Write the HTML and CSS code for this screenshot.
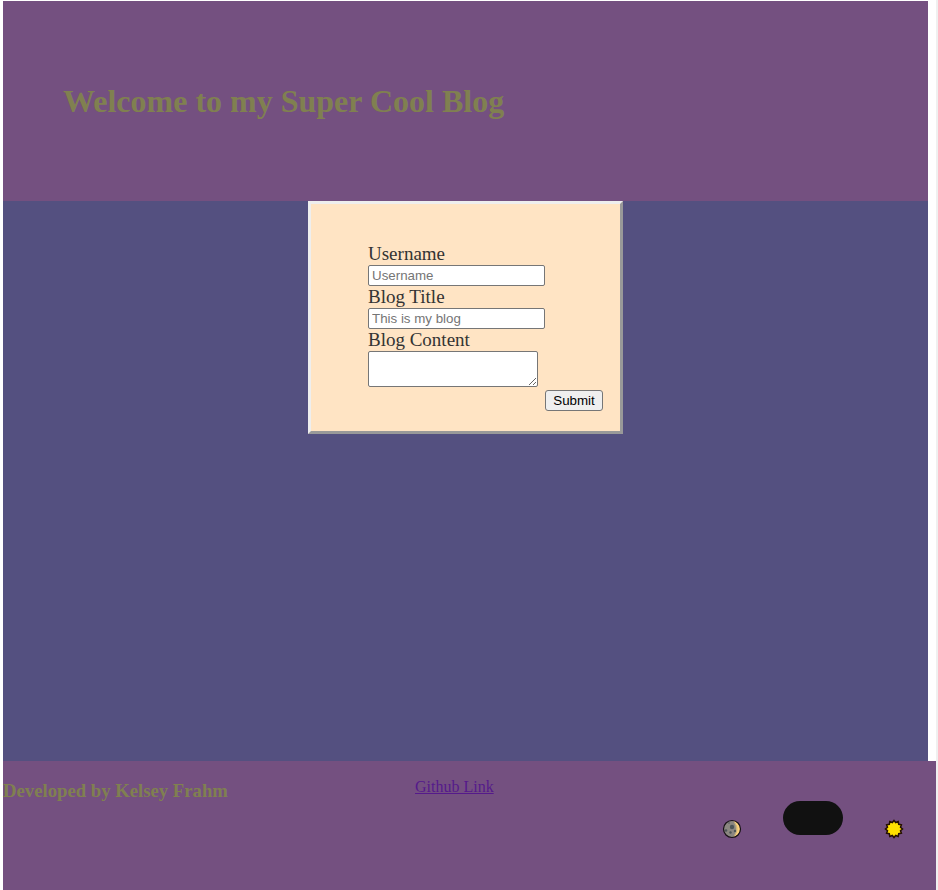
FILE: index.html
```html
<!DOCTYPE html>
<html lang="en">
<head>
<meta charset="utf-8">
<meta name="viewport" content="width=device-width, initial-scale=1">
<title>Super Cool Blog</title>
<link rel="stylesheet" href="styles.css">
</head>
<body>
<header class="banner">
  <h1>Welcome to my Super Cool Blog</h1>
</header>
<main class="content">
  <form class="entry">
    <label for="username">Username</label>
    <input id="username" type="text" placeholder="Username">
    <label for="title">Blog Title</label>
    <input id="title" type="text" placeholder="This is my blog">
    <label for="body">Blog Content</label>
    <textarea id="body"></textarea>
    <button type="submit">Submit</button>
  </form>
</main>
<footer class="footer">
  <h3>Developed by Kelsey Frahm</h3>
  <a href="#">Github Link</a>
  <div class="theme">
    <svg class="icon" viewBox="0 0 20 20" aria-hidden="true">
      <circle cx="10" cy="10" r="8.3" fill="#8b8780"/>
      <path d="M11 1.8A8.3 8.3 0 0 1 11 18.2Q15 15 15 10T11 1.8Z" fill="#ffd27c"/>
      <path d="M11.500 2.500Q15.500 6 15.500 10T11.500 17.500Q14 14 14 10T11.500 2.500Z" fill="#c9b67f"/>
      <g fill="#4d5558"><circle cx="10" cy="8" r="2.200"/><circle cx="4" cy="11.500" r="1.300"/><circle cx="8.500" cy="13.500" r="1.200"/><circle cx="13" cy="12" r="1.200"/><circle cx="7" cy="4" r="0.800"/></g>
      <circle cx="10" cy="10" r="8.500" fill="none" stroke="#171214" stroke-width="1.200"/>
    </svg>
    <button class="toggle" type="button" aria-label="Toggle theme"></button>
    <svg class="icon" viewBox="0 0 20 20" aria-hidden="true">
      <path d="M10 1.500L11.700 3.500L14.200 2.600L14.700 5.300L17.400 5.800L16.500 8.300L18.500 10L16.500 11.700L17.400 14.200L14.700 14.700L14.200 17.400L11.700 16.500L10 18.500L8.300 16.500L5.800 17.400L5.300 14.700L2.600 14.200L3.500 11.700L1.500 10L3.500 8.300L2.600 5.800L5.300 5.300L5.800 2.600L8.300 3.500Z" fill="#ffe000" stroke="#251000" stroke-width="1.500"/>
    </svg>
  </div>
</footer>
</body>
</html>
```
FILE: styles.css
```css
* {
  box-sizing: border-box;
}

html {
  background: #fff;
  border-right: 2px solid #f0f0f0;
}

body {
  margin: 0;
  padding: 1px 0 0 3px;
  min-height: 100vh;
  display: flex;
  flex-direction: column;
  font-family: "Liberation Serif", serif;
  color: #333;
}

.banner {
  margin-right: 8px;
  padding: 80px 60px;
  background: #745080;
  color: #808050;
}

h1,
h3 {
  margin: 0;
}

h1 {
  font-size: 32px;
  line-height: 40px;
}

.content {
  margin-right: 8px;
  min-height: 560px;
  flex: 1;
  display: flex;
  justify-content: center;
  align-items: flex-start;
  background: #545080;
}

.entry {
  display: grid;
  grid-template-columns: auto auto;
  justify-items: start;
  padding: 39px 17px 20px 57px;
  background: #ffe4c4;
  border: 3px solid;
  border-color: #eee #999 #999 #eee;
}

.entry label {
  grid-column: 1 / -1;
  font-size: 19px;
  line-height: 22px;
}

.entry input,
.entry textarea {
  grid-column: 1;
  margin: 0;
  border: 1px solid #767676;
  border-radius: 2px;
  background: #fff;
}

.entry input,
.entry button {
  height: 21px;
  font-family: "Liberation Sans", sans-serif;
}

.entry input {
  width: 177px;
  padding: 1px 3px;
}

.entry textarea {
  width: 170px;
  height: 36px;
  padding: 2px;
}

.entry button {
  grid-column: 2;
  grid-row: 7;
  width: 58px;
  margin-top: 3px;
  padding: 0;
  border: 1px solid #767676;
  border-radius: 3px;
  background: #efefef;
  color: #000;
}

.footer {
  min-height: 129px;
  display: grid;
  grid-template-columns: 412px 1fr auto;
  align-items: start;
  padding: 16px 32px 0 0;
  background: #745080;
}

.footer h3 {
  color: #808050;
  line-height: 28px;
}

.footer a {
  color: #551a8b;
  font-size: 16px;
  line-height: 20px;
}

.theme {
  display: flex;
  align-items: flex-end;
  gap: 41px;
  margin-top: 24px;
}

.icon {
  width: 20px;
  height: 20px;
  margin-bottom: -4px;
}

.toggle {
  width: 60px;
  height: 34px;
  padding: 0;
  border: 0;
  border-radius: 17px;
  background: #111;
}
```
